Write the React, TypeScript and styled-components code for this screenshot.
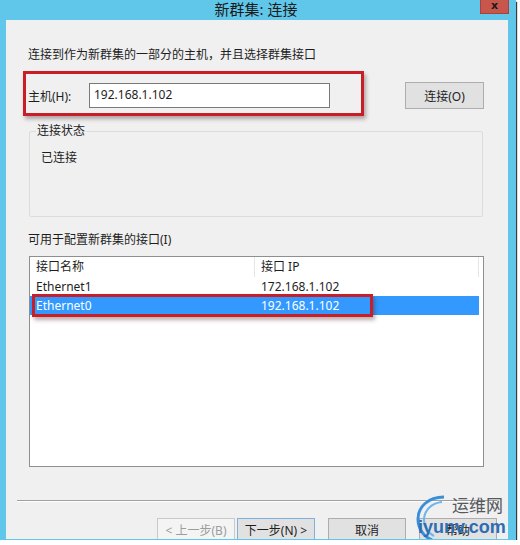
import React from 'react';
import styled, { createGlobalStyle } from 'styled-components';

const GlobalStyle = createGlobalStyle`
  html, body {
    margin: 0;
    padding: 0;
    background: #ffffff;
  }
  body {
    font-family: "Noto Sans", "Noto Sans CJK SC", sans-serif;
    font-size: 12px;
    color: #1e1e1e;
  }
`;

const Window = styled.div`
  width: 516px;
  height: 540px;
  background: #60c7ea;
  box-shadow: 1px 2px 1px #3a3a3a;
  display: flex;
  flex-direction: column;
  overflow: hidden;
`;

const TitleBar = styled.div`
  position: relative;
  height: 20px;
  flex: none;
  display: flex;
  justify-content: center;
  padding-top: 1px;
  box-sizing: border-box;
`;

const Title = styled.div`
  font-size: 15px;
  line-height: 16px;
  color: #1b1b1b;
  margin-right: 4px;
`;

const CloseButton = styled.div`
  position: absolute;
  right: 7px;
  top: 0;
  width: 29px;
  height: 14px;
  background: #c7564d;
  border: 1px solid #a7433b;
  border-top: none;
  box-sizing: border-box;
  color: #1a1a1a;
  font: bold 11px/12px "DejaVu Sans", sans-serif;
  text-align: center;
`;

const Panel = styled.div`
  position: relative;
  flex: 1;
  margin: 0 8px 1px 6px;
  background: #f0f0f0;
  padding: 27px 0 0 22px;
  overflow: hidden;
`;

const Text = styled.div<{ $top?: number; $left?: number }>`
  line-height: 16px;
  margin-top: ${({ $top }) => $top ?? 0}px;
  margin-left: ${({ $left }) => $left ?? 0}px;
`;

const HostRow = styled.div`
  display: flex;
  align-items: center;
  width: 456px;
  margin-top: 19px;
  height: 27px;
`;

const HostLabel = styled.label`
  width: 61px;
`;

const Input = styled.div`
  width: 241px;
  height: 25px;
  box-sizing: border-box;
  border: 1px solid #7a7a7a;
  background: #fff;
  padding: 3px 4px;
  line-height: 16px;
`;

const Button = styled.div<{ $variant?: 'default' | 'disabled' }>`
  box-sizing: border-box;
  width: 78px;
  height: 24px;
  display: flex;
  align-items: center;
  justify-content: center;
  background: ${({ $variant }) => ($variant === 'disabled' ? '#f4f4f4' : '#e1e1e1')};
  border: 1px solid
    ${({ $variant }) =>
      $variant === 'default' ? '#80b0dc' : $variant === 'disabled' ? '#c9c9c9' : '#adadad'};
  color: ${({ $variant }) => ($variant === 'disabled' ? '#9c9c9c' : '#1e1e1e')};
`;

const ConnectButton = styled(Button)`
  margin-left: auto;
  width: 79px;
  height: 27px;
`;

const Group = styled.fieldset`
  width: 454px;
  height: 94px;
  box-sizing: border-box;
  margin: 14px 0 0 1px;
  padding: 11px 10px 0 10px;
  border: 1px solid #dcdcdc;
  border-radius: 2px;
`;

const Legend = styled.legend`
  padding: 0 1px;
  margin-left: -4px;
  line-height: 16px;
`;

const ListView = styled.div`
  width: 455px;
  height: 211px;
  box-sizing: border-box;
  margin: 8px 0 0 1px;
  border: 1px solid #8e8f8f;
  background: #fff;
  padding: 0 4px 0 0;
`;

const Row = styled.div<{ $selected?: boolean; $header?: boolean }>`
  display: grid;
  grid-template-columns: 225px 224px;
  height: ${({ $header }) => ($header ? 20 : 19)}px;
  background: ${({ $selected }) => ($selected ? '#3399ff' : 'transparent')};
  color: ${({ $selected }) => ($selected ? '#ffffff' : '#1e1e1e')};
`;

const Cell = styled.div<{ $header?: boolean }>`
  padding-left: 6px;
  line-height: ${({ $header }) => ($header ? 20 : 19)}px;
  border-right: ${({ $header }) => ($header ? '1px solid #e5e5e5' : 'none')};
`;

const Separator = styled.div`
  width: 480px;
  height: 1px;
  margin: 33px 0 0 -11px;
  background: #a0a0a0;
  border-bottom: 1px solid #ffffff;
`;

const ButtonBar = styled.div`
  display: flex;
  gap: 13px;
  margin: 16px 0 0 129px;
`;

const Pair = styled.div`
  display: flex;
  gap: 2px;
`;

const Annotation = styled.div<{ $x: number; $y: number; $w: number; $h: number }>`
  position: absolute;
  left: ${({ $x }) => $x}px;
  top: ${({ $y }) => $y}px;
  width: ${({ $w }) => $w}px;
  height: ${({ $h }) => $h}px;
  box-sizing: border-box;
  border: 3px solid #c81e27;
  box-shadow: 2px 3px 4px rgba(60, 20, 20, 0.35);
  pointer-events: none;
`;

const Watermark = styled.div`
  position: absolute;
  right: -8px;
  bottom: -2px;
  width: 102px;
  height: 48px;
`;

const WatermarkCn = styled.div`
  position: absolute;
  left: 38px;
  top: 4px;
  font-size: 17px;
  line-height: 18px;
  color: #555a60;
`;

const WatermarkEn = styled.div`
  position: absolute;
  left: 4px;
  top: 24px;
  font: bold 18px/20px "Liberation Sans", sans-serif;
  color: #2d6db3;
`;

export default function App() {
  return (
    <>
      <GlobalStyle />
      <Window>
        <TitleBar>
          <Title>新群集: 连接</Title>
          <CloseButton>x</CloseButton>
        </TitleBar>
        <Panel>
          <Text>连接到作为新群集的一部分的主机，并且选择群集接口</Text>
          <HostRow>
            <HostLabel>主机(H):</HostLabel>
            <Input>192.168.1.102</Input>
            <ConnectButton>连接(O)</ConnectButton>
          </HostRow>
          <Group>
            <Legend>连接状态</Legend>
            <Text $left={1}>已连接</Text>
          </Group>
          <Text $top={15}>可用于配置新群集的接口(I)</Text>
          <ListView>
            <Row $header>
              <Cell $header>接口名称</Cell>
              <Cell $header>接口 IP</Cell>
            </Row>
            <Row>
              <Cell>Ethernet1</Cell>
              <Cell>172.168.1.102</Cell>
            </Row>
            <Row $selected>
              <Cell>Ethernet0</Cell>
              <Cell>192.168.1.102</Cell>
            </Row>
          </ListView>
          <Separator />
          <ButtonBar>
            <Pair>
              <Button $variant="disabled">&lt; 上一步(B)</Button>
              <Button $variant="default">下一步(N) &gt;</Button>
            </Pair>
            <Button>取消</Button>
            <Button>帮助</Button>
          </ButtonBar>
          <Annotation $x={17} $y={51} $w={341} $h={45} />
          <Annotation $x={26} $y={274} $w={341} $h={23} />
          <Watermark>
            <svg width="44" height="48" viewBox="0 0 44 48">
              <path d="M30 4 C14 4 4 14 4 26 C4 36 10 44 18 47" fill="none" stroke="#3a8fd8" strokeWidth="3" />
              <path d="M28 9 C17 10 10 18 10 27 C10 34 14 40 20 43" fill="none" stroke="#6fb4ea" strokeWidth="2" />
            </svg>
            <WatermarkCn>运维网</WatermarkCn>
            <WatermarkEn>iyunv.com</WatermarkEn>
          </Watermark>
        </Panel>
      </Window>
    </>
  );
}
